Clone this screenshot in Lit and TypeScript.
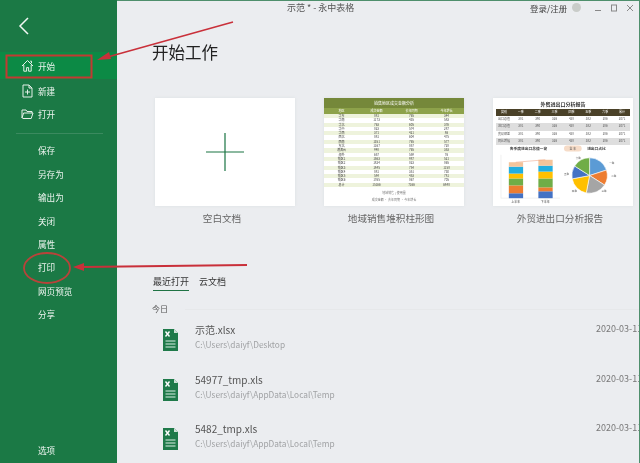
import { LitElement, html, css, svg } from "lit";
import { customElement } from "lit/decorators.js";

const top = ["开始", "新建", "打开"];
const mid = ["保存", "另存为", "输出为", "关闭", "属性", "打印", "网页预览", "分享"];
const icons: Record<string, unknown> = {
  "开始": svg`<path d="M1 7 6.500 1.500 12 7M2.800 6v6.200h2.800V8.600h2v3.600h2.600V6M9.200 2.200h1.300v2"/>`,
  "新建": svg`<path d="M2 1h6l3 3v9H2zM8 1v3h3M6.500 5.500v5M4 8h5"/>`,
  "打开": svg`<path d="M1 11V3h4l1 1.500h5V6M1 11l1.600-5H12l-1.800 5.500H1.500"/>`,
};
const salesRows = [
  ["华东", "881", "765", "344"], ["华南", "1173", "435", "583"], ["华北", "763", "605", "376"],
  ["华中", "823", "574", "287"], ["华西", "371", "421", "86"], ["西北", "881", "604", "475"],
  ["西南", "1351", "765", "577"], ["东北", "1167", "857", "728"], ["港澳台", "948", "765", "353"],
  ["海外", "657", "559", "76"], ["销区1", "1563", "987", "521"], ["销区2", "1824", "823", "865"],
  ["销区3", "1845", "754", "1158"], ["销区4", "881", "351", "730"], ["销区5", "584", "453", "781"],
  ["销区6", "1765", "867", "705"], ["总计", "15166", "7166", "6848"],
];
const tradeHead = ["类别", "一季", "二季", "三季", "四季", "五季", "六季", "累计"];
const tradeRows = ["出口总值", "进口总值", "贸易顺差", "同比增幅"];
const files = [
  ["示范.xlsx", "C:\\Users\\daiyf\\Desktop"],
  ["54977_tmp.xls", "C:\\Users\\daiyf\\AppData\\Local\\Temp"],
  ["5482_tmp.xls", "C:\\Users\\daiyf\\AppData\\Local\\Temp"],
];
const colors = ["#4472c4", "#ed7d31", "#70ad47", "#ffc000", "#22aee0", "#f3c49b"];
const stacks = [
  { x: 14, segs: [5, 8, 7, 5, 7, 4.500] },
  { x: 44, segs: [7, 4, 9, 7, 6, 6] },
];

@customElement("app-root")
export class AppRoot extends LitElement {
  static styles = css`
    :host { display: block; width: 640px; height: 463px; overflow: hidden; position: relative;
      font-family: "Noto Sans CJK SC", "Noto Sans", sans-serif; }
    .win { display: flex; height: 463px; filter: blur(0.35px); }
    .side { width: 117px; flex: none; background: #1b7945; color: #eef5f0; display: flex; flex-direction: column;
      padding-top: 52px; box-sizing: border-box; font-size: 8.600px; position: relative; }
    .back { position: absolute; left: 18px; top: 17px; }
    .item { height: 23.400px; display: flex; align-items: center; padding-left: 38px; position: relative; }
    .item.active { height: 27px; background: #0c8a45; }
    .item svg { position: absolute; left: 20.500px; fill: none; stroke: #e4f0e8; stroke-width: 1; }
    .sep { height: 1px; background: #3b8a5f; margin: 7px 14px 5px 16px; }
    .spacer { flex: 1; }
    .opt { margin-bottom: 1.300px; }
    .main { flex: 1; min-width: 0; overflow: hidden; background: #ebedf0; border-top: 1px solid #4e8f6c; border-right: 1.500px solid #4e8f6c;
      box-sizing: border-box; display: flex; flex-direction: column; position: relative; }
    .bar { height: 15px; display: flex; align-items: center; font-size: 9px; color: #555; padding-left: 170px; }
    .bar .ttl { width: 243px; }
    .bar .login { width: 42px; font-size: 8.500px; color: #444; }
    .avatar { width: 9px; height: 9px; border-radius: 50%; background: #c9ccc9; }
    .ctl { display: flex; align-items: center; gap: 10px; margin-left: 14px; }
    .ctl svg { fill: none; stroke: #888; display: block; }
    h1 { margin: 0; font-weight: 400; font-size: 16.500px; line-height: 24px; color: #222; padding: 26px 0 0 35px; box-sizing: border-box; height: 50px; }
    .cards { display: flex; margin-top: 34px; padding-left: 38px; gap: 29px; }
    .card { display: flex; flex-direction: column; align-items: center; width: 140px; flex: none; }
    .thumb { width: 140px; height: 108px; background: #fff; box-shadow: 0 0 3px #dcdfe2; overflow: hidden; box-sizing: border-box; }
    .cap { font-size: 9.600px; color: #666; line-height: 14px; margin-top: 5px; padding-right: 6px; white-space: nowrap; }
    .blank { display: flex; align-items: center; justify-content: center; }
    .blank svg { display: block; }
    .sales { font-size: 3px; color: #444; }
    .s-title { background: #75883a; color: #fff; height: 10px; line-height: 10px; text-align: center; font-size: 4px; }
    .s-row { display: grid; grid-template-columns: repeat(4, 1fr); height: 4.300px; line-height: 4.300px; text-align: center; }
    .s-row.h { background: #8da24a; color: #fff; height: 6px; line-height: 6px; }
    .s-row:nth-child(odd) { background: #eef3dc; }
    .s-row.h:nth-child(odd) { background: #8da24a; }
    .s-foot { text-align: center; line-height: 7px; margin-top: 3px; color: #777; }
    .trade { padding: 2px 1px 0; font-size: 3px; color: #555; display: flex; flex-direction: column; }
    .t-title { text-align: center; font-size: 5px; line-height: 8px; color: #333; font-weight: 700; }
    .t-row { display: grid; grid-template-columns: repeat(8, 1fr); gap: 0 1px; height: 7.200px; line-height: 7.200px; text-align: center; margin: 0 2px; }
    .t-row.h { background: #4a4128; color: #fff; margin-top: 1px; }
    .t-row.g { background: #dedede; }
    .trade svg { display: block; }
    .tabs { display: flex; gap: 10px; margin: 50px 0 0 36px; font-size: 9px; color: #333; line-height: 14px; }
    .tab { padding: 0 0 1px; }
    .tab.on { border-bottom: 1.500px solid #1f7344; padding-bottom: 1px; }
    .today { display: flex; align-items: center; gap: 17px; margin: 12px 0 0 35px; font-size: 8px; color: #555; line-height: 12px; }
    .today i { flex: 1; height: 1px; background: #e6e8ea; }
    .files { margin-top: 7px; }
    .file { display: flex; width: 492px; margin-left: 45px; height: 49.500px; align-items: flex-start; }
    .file svg { flex: none; margin: 6px 16px 0 0; display: block; }
    .meta { flex: 1; min-width: 0; }
    .name { font-size: 10px; color: #555; line-height: 15px; }
    .path { font-size: 8.300px; color: #a0a2a4; line-height: 12px; margin-top: 1px; }
    .date { width: 58px; font-size: 9px; color: #777; line-height: 14px; white-space: nowrap; }
    .marks { position: absolute; inset: 0; pointer-events: none; }
  `;

  private fileIcon() {
    return html`<svg width="17" height="24" viewBox="0 0 17 24">
      <path d="M1 1h11l4 4v18H1z" fill="#1f7a4a"/><path d="M12 1l4 4h-4z" fill="#cfe3d8"/>
      <path d="M3.500 3.500 7.500 8.500M7.500 3.500 3.500 8.500" stroke="#fff" stroke-width="1.400"/>
      <path d="M3.500 13h10M3.500 16h10M3.500 19h10" stroke="#dcefe5" stroke-width="1"/></svg>`;
  }

  private pie() {
    const cx = 96, cy = 31, r = 18;
    const parts: [number, string][] = [[.2, "#5b9bd5"], [.14, "#ed7d31"], [.19, "#a5a5a5"], [.19, "#ffc000"], [.12, "#4472c4"], [.16, "#70ad47"]];
    let a = -Math.PI / 2;
    return parts.map(([p, c]) => {
      const b = a + p * 2 * Math.PI;
      const d = `M${cx} ${cy}L${cx + r * Math.cos(a)} ${cy + r * Math.sin(a)}A${r} ${r} 0 0 1 ${cx + r * Math.cos(b)} ${cy + r * Math.sin(b)}Z`;
      a = b;
      return svg`<path d=${d} fill=${c} stroke="#fff" stroke-width=".6"/>`;
    });
  }

  private chart() {
    return html`<svg width="138" height="62" viewBox="0 0 138 62" font-family="Noto Sans CJK SC, sans-serif">
      <text x="34" y="5" font-size="3.800" text-anchor="middle" fill="#444" font-weight="700">各季度进出口总值一览</text>
      <rect x="70" y="0.500" width="18" height="6" rx="3" fill="#f6dcc8"/>
      <text x="79" y="4.800" font-size="3" text-anchor="middle" fill="#555">全 年</text>
      <text x="103" y="5" font-size="3.800" text-anchor="middle" fill="#444" font-weight="700">进出口占比</text>
      <path d="M6 10V54H66" stroke="#e2e2e2" stroke-width=".5" fill="none"/>
      ${stacks.map((s) => {
        let y = 54;
        return s.segs.map((h, i) => {
          y -= h;
          return svg`<rect x=${s.x} y=${y} width="14.500" height=${h} fill=${colors[i]}/>`;
        });
      })}
      <path d="M21 17.500 51 15" stroke="#ee9977" stroke-width=".5"/>
      <text x="21" y="58.500" font-size="3" text-anchor="middle" fill="#444">上半年</text>
      <text x="51" y="58.500" font-size="3" text-anchor="middle" fill="#444">下半年</text>
      ${this.pie()}
      <text x="116" y="19" font-size="2.600" fill="#666">一季</text>
      <text x="118" y="32" font-size="2.600" fill="#666">二季</text>
      <text x="108" y="48" font-size="2.600" fill="#666">三季</text>
      <text x="78" y="48" font-size="2.600" fill="#666">四季</text>
      <text x="70" y="30" font-size="2.600" fill="#666">五季</text>
      <text x="82" y="14" font-size="2.600" fill="#666">六季</text>
    </svg>`;
  }

  render() {
    return html`
      <div class="win">
        <nav class="side">
          <svg class="back" width="12" height="18" viewBox="0 0 12 18" fill="none" stroke="#f2f7f4" stroke-width="1.500"><path d="M10 1 2 9l8 8"/></svg>
          ${top.map((t, i) => html`<div class="item ${i === 0 ? "active" : ""}">
            <svg width="13" height="14" viewBox="0 0 13 14">${icons[t]}</svg>${t}</div>`)}
          <div class="sep"></div>
          ${mid.map((t) => html`<div class="item">${t}</div>`)}
          <div class="spacer"></div>
          <div class="item opt">选项</div>
        </nav>
        <main class="main">
          <div class="bar">
            <span class="ttl">示范 * - 永中表格</span>
            <span class="login">登录/注册</span>
            <span class="avatar"></span>
            <span class="ctl">
              <svg width="6" height="8" viewBox="0 0 6 8"><path d="M0 6.500h6"/></svg>
              <svg width="6" height="8" viewBox="0 0 6 8"><rect x=".5" y="1" width="5" height="6"/></svg>
              <svg width="6" height="8" viewBox="0 0 6 8"><path d="M0 1l6 6M6 1 0 7"/></svg>
            </span>
          </div>
          <h1>开始工作</h1>
          <section class="cards">
            <div class="card">
              <div class="thumb blank"><svg width="38" height="38" viewBox="0 0 38 38"><path d="M19 0v38M0 19h38" stroke="#1a7443" stroke-width="1.200"/></svg></div>
              <div class="cap">空白文档</div>
            </div>
            <div class="card">
              <div class="thumb sales">
                <div class="s-title">销售地区成交金额分析</div>
                <div class="s-row h"><span>地区</span><span>成交金额</span><span>去年同期</span><span>今年增长</span></div>
                ${salesRows.map((r) => html`<div class="s-row">${r.map((c) => html`<span>${c}</span>`)}</div>`)}
                <div class="s-foot">地域销售 / 使用量<br />成交金额 · 去年同期 · 今年增长</div>
              </div>
              <div class="cap">地域销售堆积柱形图</div>
            </div>
            <div class="card">
              <div class="thumb trade">
                <div class="t-title">外贸进出口分析报告</div>
                <div class="t-row h">${tradeHead.map((c) => html`<span>${c}</span>`)}</div>
                ${tradeRows.map((r, i) => html`<div class="t-row ${i % 2 ? "g" : ""}"><span>${r}</span>${["381", "390", "326", "428", "382", "286", "2071"].map((c) => html`<span>${c}</span>`)}</div>`)}
                ${this.chart()}
              </div>
              <div class="cap">外贸进出口分析报告</div>
            </div>
          </section>
          <div class="tabs"><span class="tab on">最近打开</span><span class="tab">云文档</span></div>
          <div class="today">今日<i></i></div>
          <div class="files">
            ${files.map(([n, p]) => html`<div class="file">${this.fileIcon()}
              <div class="meta"><div class="name">${n}</div><div class="path">${p}</div></div>
              <div class="date">2020-03-11</div></div>`)}
          </div>
        </main>
      </div>
      <svg class="marks" width="640" height="463" viewBox="0 0 640 463" fill="none" stroke="#c9303a">
        <rect x="6.500" y="55.500" width="85" height="22" stroke-width="2" stroke="#c23a32"/>
        <path d="M233 22 104 58" stroke-width="1.500"/>
        <path d="M97 60 109 52 111 59Z" fill="#c9303a" stroke="none"/>
        <ellipse cx="47" cy="268" rx="23" ry="15" stroke-width="1.800" stroke="#b8433a"/>
        <path d="M247 265 82 267" stroke-width="1.800"/>
        <path d="M73 267 84 263V271Z" fill="#c9303a" stroke="none"/>
      </svg>
    `;
  }
}
